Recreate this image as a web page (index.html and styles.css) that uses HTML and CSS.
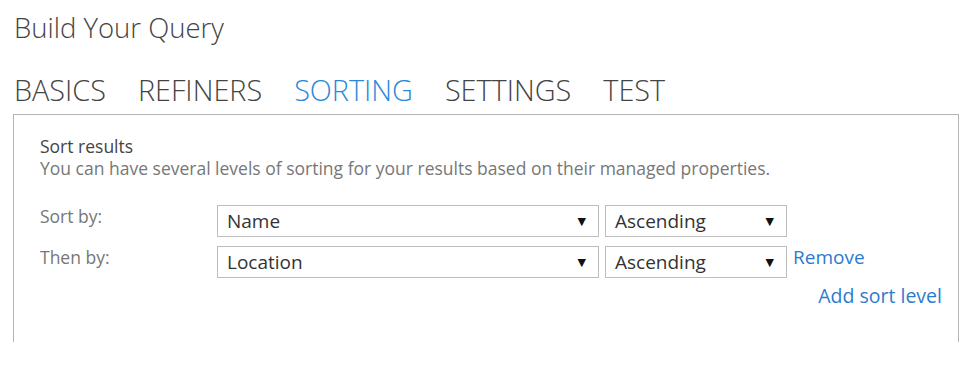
FILE: index.html
```html
<!DOCTYPE html>
<html>
<head>
<meta charset="utf-8">
<link rel="stylesheet" href="styles.css">
</head>
<body>
<div class="page">
  <h1 class="title">Build Your Query</h1>
  <nav class="tabs">
    <span class="tab">BASICS</span>
    <span class="tab">REFINERS</span>
    <span class="tab active">SORTING</span>
    <span class="tab">SETTINGS</span>
    <span class="tab">TEST</span>
  </nav>
  <section class="panel">
    <div class="heading">Sort results</div>
    <div class="desc">You can have several levels of sorting for your results based on their managed properties.</div>
    <div class="rows">
      <div class="row">
        <div class="label">Sort by:</div>
        <div class="select prop"><span class="val">Name</span><span class="arrow">&#9660;</span></div>
        <div class="select dir"><span class="val">Ascending</span><span class="arrow">&#9660;</span></div>
      </div>
      <div class="row">
        <div class="label">Then by:</div>
        <div class="select prop"><span class="val">Location</span><span class="arrow">&#9660;</span></div>
        <div class="select dir"><span class="val">Ascending</span><span class="arrow">&#9660;</span></div>
        <a class="link remove">Remove</a>
      </div>
    </div>
    <div class="addrow"><a class="link add">Add sort level</a></div>
  </section>
</div>
</body>
</html>
```
FILE: styles.css
```css
html, body {
  margin: 0;
  padding: 0;
  background: #fff;
}
.page {
  font-family: "Open Sans", "Noto Sans", sans-serif;
  color: #444;
  padding: 10px 0 0 13px;
  width: 946px;
}
.title {
  margin: 0 0 0 1px;
  font-size: 27.5px;
  font-weight: 300;
  line-height: 36px;
  color: #444;
}
.tabs {
  display: flex;
  gap: 32px;
  margin: 26px 0 0 1px;
}
.tab {
  font-size: 28.8px;
  font-weight: 300;
  line-height: 36px;
  color: #444;
}
.tab.active {
  color: #2b88d8;
}
.panel {
  box-sizing: border-box;
  margin-top: 6px;
  border: 1px solid #b5b5b5;
  border-bottom: none;
  height: 228px;
  padding: 20px 16px 0 26px;
}
.heading {
  font-size: 17.5px;
  line-height: 22px;
  color: #444;
}
.desc {
  font-size: 17.5px;
  line-height: 23px;
  color: #777;
}
.rows {
  margin-top: 25px;
  display: flex;
  flex-direction: column;
  gap: 9px;
}
.row {
  display: flex;
  align-items: flex-start;
}
.label {
  width: 177px;
  font-size: 17.5px;
  line-height: 22px;
  color: #777;
}
.select {
  box-sizing: border-box;
  height: 32px;
  border: 1px solid #bdbdbd;
  display: flex;
  align-items: center;
  justify-content: space-between;
  padding: 0 12px 0 9px;
  font-size: 19px;
  color: #333;
  margin-right: 6px;
}
.select.prop { width: 382px; }
.select.dir { width: 182px; }
.arrow {
  font-size: 11px;
  color: #111;
  font-family: "DejaVu Sans", sans-serif;
}
.link {
  color: #2b7bd0;
  font-size: 19px;
  line-height: 22px;
  cursor: pointer;
}
.add {
  font-size: 19.5px;
}
.addrow {
  display: flex;
  justify-content: flex-end;
  margin-top: 7px;
}
```
